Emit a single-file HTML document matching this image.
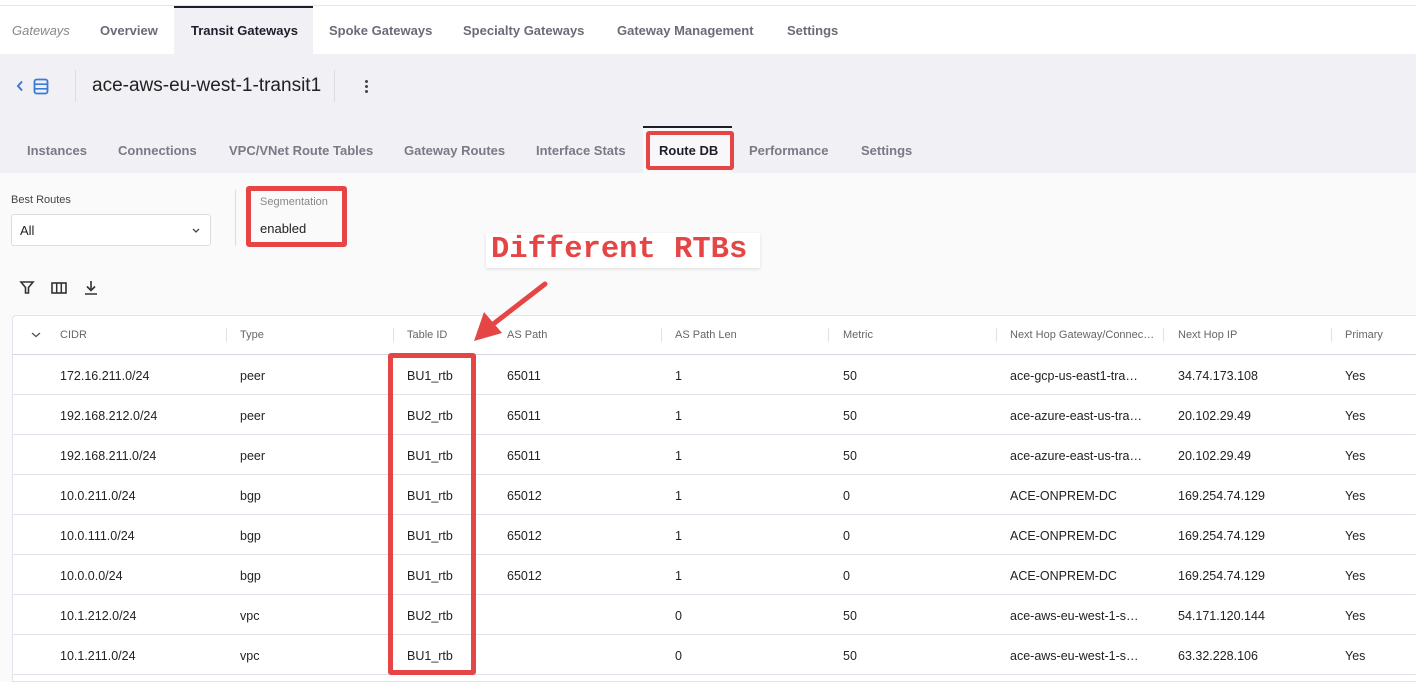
<!DOCTYPE html>
<html><head><meta charset="utf-8"><style>
*{box-sizing:border-box;margin:0;padding:0}
body{width:1416px;height:682px;overflow:hidden;background:#fafafa;font-family:"Liberation Sans",sans-serif;position:relative;color:#222}
.a{position:absolute;white-space:nowrap}
.nav{font-size:13px;font-weight:bold;color:#6b6b78}
.sub{font-size:13px;font-weight:bold;color:#7a7a86}
.th{font-size:11px;color:#666}
.td{font-size:12.5px;color:#222}
.dv{position:absolute;width:1px;height:14px;background:#e2e2e6;top:328px}
.rl{position:absolute;left:12px;width:1404px;height:1px;background:#e2e2ea}
</style></head><body>
<div class="a" style="left:0;top:0;width:1416px;height:54px;background:#fff"></div>
<div class="a" style="left:0;top:5px;width:1416px;height:1px;background:#e6e6e6"></div>
<div class="a" style="left:174px;top:6px;width:139px;height:48px;background:#f0f0f5;border-top:2px solid #1e1e2a"></div>
<div class="a nav" style="left:12px;top:23px;font-weight:normal;font-style:italic;color:#888">Gateways</div>
<div class="a nav" style="left:100px;top:23px">Overview</div>
<div class="a nav" style="left:191px;top:23px;color:#1e1e2a">Transit Gateways</div>
<div class="a nav" style="left:329px;top:23px">Spoke Gateways</div>
<div class="a nav" style="left:463px;top:23px">Specialty Gateways</div>
<div class="a nav" style="left:617px;top:23px">Gateway Management</div>
<div class="a nav" style="left:787px;top:23px">Settings</div>
<div class="a" style="left:0;top:54px;width:1416px;height:119px;background:#f0f0f5"></div>
<svg class="a" style="left:16px;top:80px" width="8" height="12" viewBox="0 0 8 12"><path d="M6 1.5L2 6l4 4.5" fill="none" stroke="#3b7bd6" stroke-width="2"/></svg>
<svg class="a" style="left:33px;top:78px" width="16" height="17" viewBox="0 0 16 17"><rect x="1.5" y="1.5" width="13" height="14" rx="2" fill="none" stroke="#3b7bd6" stroke-width="1.8"/><line x1="2" y1="6.2" x2="14" y2="6.2" stroke="#3b7bd6" stroke-width="1.6"/><line x1="2" y1="10.8" x2="14" y2="10.8" stroke="#3b7bd6" stroke-width="1.6"/></svg>
<div class="a" style="left:75px;top:70px;width:1px;height:32px;background:#dcdce2"></div>
<div class="a" style="left:92px;top:75px;font-size:19px;color:#222">ace-aws-eu-west-1-transit1</div>
<div class="a" style="left:334px;top:70px;width:1px;height:32px;background:#dcdce2"></div>
<div class="a" style="left:365px;top:80px;width:3px;height:3px;border-radius:2px;background:#444;box-shadow:0 5px 0 #444,0 10px 0 #444"></div>
<div class="a" style="left:643px;top:126px;width:89px;height:47px;background:#f8f8fa;border-top:2px solid #1e1e2a"></div>
<div class="a sub" style="left:27px;top:143px">Instances</div>
<div class="a sub" style="left:118px;top:143px">Connections</div>
<div class="a sub" style="left:229px;top:143px">VPC/VNet Route Tables</div>
<div class="a sub" style="left:404px;top:143px">Gateway Routes</div>
<div class="a sub" style="left:536px;top:143px">Interface Stats</div>
<div class="a sub" style="left:659px;top:143px;color:#1e1e2a">Route DB</div>
<div class="a sub" style="left:749px;top:143px">Performance</div>
<div class="a sub" style="left:861px;top:143px">Settings</div>
<div class="a" style="left:646px;top:131px;width:88px;height:39px;border:4px solid #e64545;border-radius:3px"></div>
<div class="a" style="left:11px;top:194px;font-size:11px;color:#444">Best Routes</div>
<div class="a" style="left:11px;top:214px;width:200px;height:32px;background:#fff;border:1px solid #dcdce2;border-radius:3px"></div>
<div class="a" style="left:20px;top:223px;font-size:13px">All</div>
<svg class="a" style="left:192px;top:228px" width="8" height="6"><path d="M1 1l3 3 3-3" fill="none" stroke="#444" stroke-width="1.3"/></svg>
<div class="a" style="left:235px;top:190px;width:1px;height:56px;background:#dcdce2"></div>
<div class="a" style="left:246px;top:186px;width:101px;height:61px;border:5px solid #e64545;border-radius:3px;background:#fafafa"></div>
<div class="a" style="left:260px;top:196px;font-size:11px;color:#888">Segmentation</div>
<div class="a" style="left:260px;top:221px;font-size:13px">enabled</div>
<div class="a" style="left:486px;top:233px;width:274px;height:35px;background:#fff;box-shadow:0 1px 3px rgba(0,0,0,.12)"></div>
<div class="a" style="left:491px;top:232px;font-family:'Liberation Mono',monospace;font-weight:bold;font-size:30.5px;line-height:36px;color:#e64545">Different RTBs</div>
<svg class="a" style="left:0;top:0" width="200" height="682">
<path d="M21 282h12l-4.5 5.5v5.5h-3v-5.5z" fill="none" stroke="#333" stroke-width="1.6"/>
<rect x="52" y="283" width="14" height="10" fill="none" stroke="#333" stroke-width="1.6"/><line x1="56.7" y1="283" x2="56.7" y2="293" stroke="#333" stroke-width="1.5"/><line x1="61.3" y1="283" x2="61.3" y2="293" stroke="#333" stroke-width="1.5"/>
<path d="M91 281v9M87 286.5l4 4 4-4M85 294h12" fill="none" stroke="#333" stroke-width="1.6"/></svg>
<div class="a" style="left:12px;top:315px;width:1404px;height:367px;background:#fff;border:1px solid #e2e2ea;border-right:none;border-radius:4px 0 0 0"></div>
<svg class="a" style="left:31px;top:332px" width="10" height="6"><path d="M1 1l4 3.5 4-3.5" fill="none" stroke="#555" stroke-width="1.3"/></svg>
<div class="a th" style="left:60px;top:329px">CIDR</div>
<div class="dv" style="left:226px"></div><div class="a th" style="left:240px;top:329px">Type</div>
<div class="dv" style="left:393px"></div><div class="a th" style="left:407px;top:329px">Table ID</div>
<div class="a th" style="left:507px;top:329px">AS Path</div>
<div class="dv" style="left:661px"></div><div class="a th" style="left:675px;top:329px">AS Path Len</div>
<div class="dv" style="left:828px"></div><div class="a th" style="left:843px;top:329px">Metric</div>
<div class="dv" style="left:996px"></div><div class="a th" style="left:1010px;top:329px">Next Hop Gateway/Connec…</div>
<div class="dv" style="left:1163px"></div><div class="a th" style="left:1178px;top:329px">Next Hop IP</div>
<div class="dv" style="left:1331px"></div><div class="a th" style="left:1345px;top:329px">Primary</div>
<div class="rl" style="top:354px;background:#d6d6de"></div>
<div class="rl" style="top:394px"></div><div class="rl" style="top:434px"></div><div class="rl" style="top:474px"></div><div class="rl" style="top:514px"></div><div class="rl" style="top:554px"></div><div class="rl" style="top:594px"></div><div class="rl" style="top:634px"></div><div class="rl" style="top:674px"></div>
<div class="a td" style="left:60px;top:356px;line-height:40px">172.16.211.0/24<br>192.168.212.0/24<br>192.168.211.0/24<br>10.0.211.0/24<br>10.0.111.0/24<br>10.0.0.0/24<br>10.1.212.0/24<br>10.1.211.0/24</div>
<div class="a td" style="left:240px;top:356px;line-height:40px">peer<br>peer<br>peer<br>bgp<br>bgp<br>bgp<br>vpc<br>vpc</div>
<div class="a td" style="left:407px;top:356px;line-height:40px">BU1_rtb<br>BU2_rtb<br>BU1_rtb<br>BU1_rtb<br>BU1_rtb<br>BU1_rtb<br>BU2_rtb<br>BU1_rtb</div>
<div class="a td" style="left:507px;top:356px;line-height:40px">65011<br>65011<br>65011<br>65012<br>65012<br>65012</div>
<div class="a td" style="left:675px;top:356px;line-height:40px">1<br>1<br>1<br>1<br>1<br>1<br>0<br>0</div>
<div class="a td" style="left:843px;top:356px;line-height:40px">50<br>50<br>50<br>0<br>0<br>0<br>50<br>50</div>
<div class="a td" style="left:1010px;top:356px;line-height:40px">ace-gcp-us-east1-tra…<br>ace-azure-east-us-tra…<br>ace-azure-east-us-tra…<br>ACE-ONPREM-DC<br>ACE-ONPREM-DC<br>ACE-ONPREM-DC<br>ace-aws-eu-west-1-s…<br>ace-aws-eu-west-1-s…</div>
<div class="a td" style="left:1178px;top:356px;line-height:40px">34.74.173.108<br>20.102.29.49<br>20.102.29.49<br>169.254.74.129<br>169.254.74.129<br>169.254.74.129<br>54.171.120.144<br>63.32.228.106</div>
<div class="a td" style="left:1345px;top:356px;line-height:40px">Yes<br>Yes<br>Yes<br>Yes<br>Yes<br>Yes<br>Yes<br>Yes</div>
<div class="a" style="left:388px;top:353px;width:88px;height:322px;border:5px solid #e64545;border-radius:3px"></div>
<svg class="a" style="left:0;top:0" width="1416" height="682"><path d="M545 284 L492 325" stroke="#e64545" stroke-width="5" stroke-linecap="round"/><polygon points="474,341 484,312 502,333" fill="#e64545"/></svg>
</body></html>
